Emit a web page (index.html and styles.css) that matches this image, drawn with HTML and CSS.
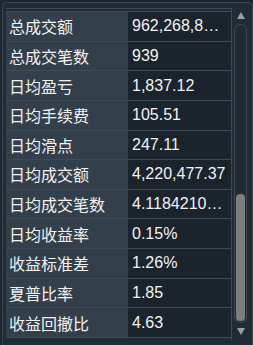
FILE: index.html
```html
<!DOCTYPE html>
<html lang="zh">
<head>
<meta charset="utf-8">
<link rel="stylesheet" href="styles.css">
</head>
<body>
<div class="panel">
  <div class="table">
    <div class="grid">
      <div class="k">总成交额</div><div class="v">962,268,8…</div>
      <div class="k">总成交笔数</div><div class="v">939</div>
      <div class="k">日均盈亏</div><div class="v">1,837.12</div>
      <div class="k">日均手续费</div><div class="v">105.51</div>
      <div class="k">日均滑点</div><div class="v">247.11</div>
      <div class="k">日均成交额</div><div class="v">4,220,477.37</div>
      <div class="k">日均成交笔数</div><div class="v">4.1184210…</div>
      <div class="k">日均收益率</div><div class="v">0.15%</div>
      <div class="k">收益标准差</div><div class="v">1.26%</div>
      <div class="k">夏普比率</div><div class="v">1.85</div>
      <div class="k">收益回撤比</div><div class="v">4.63</div>
    </div>
  </div>
  <div class="scroll">
    <div class="arrow up"></div>
    <div class="track"><div class="thumb"></div></div>
    <div class="arrow down"></div>
  </div>
</div>
</body>
</html>
```

FILE: styles.css
```css
html, body {
  margin: 0;
  padding: 0;
  background: #1d252e;
}
body {
  width: 253px;
  height: 345px;
  overflow: hidden;
}
.panel {
  margin: 2px 0 0 2px;
  width: 246px;
  height: 339px;
  border: 1px solid #3b4651;
  border-radius: 4px;
  background: #222b35;
  box-sizing: content-box;
  padding: 5px 0 0 3px;
  display: flex;
}
.table {
  width: 225px;
  height: 329px;
  border-top: 1px solid #3d4853;
  border-right: 1px solid #3d4853;
  padding-top: 2px;
}
.grid {
  height: 327px;
  box-sizing: border-box;
  display: grid;
  grid-template-columns: 122px 1fr;
  grid-template-rows: repeat(11, 1fr);
  row-gap: 1px;
  padding: 1px 0;
  background: #3f4a55;
}
.k, .v {
  display: flex;
  align-items: center;
  color: #f2f2f2;
  white-space: nowrap;
  overflow: hidden;
}
.k {
  background: #333f4a;
  padding-left: 3px;
  font-family: "Noto Sans CJK SC", sans-serif;
  font-size: 16px;
}
.v {
  background: #1b232d;
  padding-left: 4px;
  font-family: "Liberation Sans", Arial, sans-serif;
  font-size: 16px;
}
.scroll {
  width: 17px;
  display: flex;
  flex-direction: column;
  align-items: center;
  padding-top: 4px;
}
.arrow {
  width: 0;
  height: 0;
  border-left: 4px solid transparent;
  border-right: 4px solid transparent;
}
.arrow.up {
  border-bottom: 7px solid #9a9ea3;
}
.arrow.down {
  margin-top: 5px;
  border-top: 7px solid #9a9ea3;
}
.track {
  margin-top: 5px;
  width: 11px;
  height: 296px;
  border: 1px solid #3d4853;
  border-radius: 6px;
  display: flex;
  flex-direction: column;
  justify-content: flex-end;
  align-items: center;
  padding-bottom: 1px;
}
.thumb {
  width: 9px;
  height: 127px;
  background: #7d7d7d;
  border-radius: 4px;
}
```
